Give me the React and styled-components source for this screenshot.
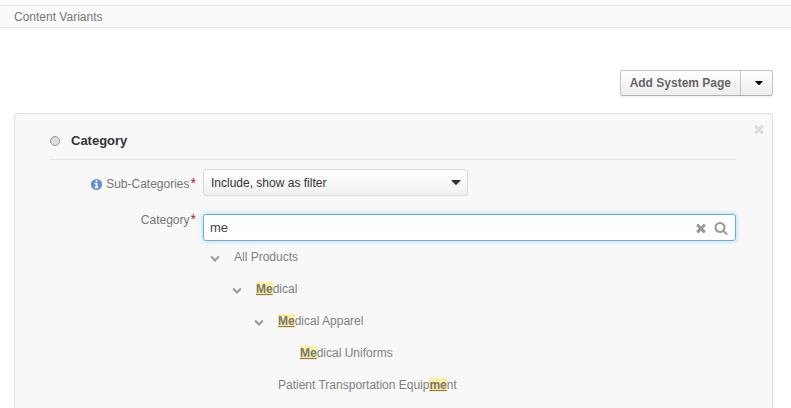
import React, { useState } from "react";
import styled, { createGlobalStyle } from "styled-components";

const GlobalStyle = createGlobalStyle`
  *, *::before, *::after { box-sizing: border-box; }
  body {
    margin: 0;
    background: #fff;
    color: #777;
    font: 12px/16px "Liberation Sans", Arial, sans-serif;
  }
  button, input, select { font: inherit; }
`;

const Page = styled.div`
  display: flex;
  flex-direction: column;
  min-height: 100vh;
  padding-top: 5px;
`;

const TitleBar = styled.header`
  padding: 3px 14px 2px;
  border: solid #e4e4e4;
  border-width: 1px 0;
  background: #fafafa;
  line-height: 16px;
`;

const Main = styled.main`
  display: flex;
  flex: 1;
  flex-direction: column;
  gap: 17px;
  padding: 42px 18px 0 14px;
`;

const SplitButton = styled.div`
  display: flex;
  align-self: flex-end;
  height: 26px;
  border: 1px solid #c4c4c4;
  border-bottom-color: #b0b0b0;
  border-radius: 3px;
  background: linear-gradient(#fff, #ededed);
  box-shadow: 0 1px 2px rgba(0, 0, 0, 0.08);
`;

const ActionButton = styled.button`
  padding: 0 9px;
  border: 0;
  background: none;
  color: #666;
  font-weight: bold;
`;

const MenuButton = styled.button`
  display: flex;
  align-items: center;
  justify-content: center;
  width: 32px;
  padding: 0 0 0 4px;
  border: 0;
  border-left: 1px solid #c4c4c4;
  background: none;
  color: #000;
`;

const Panel = styled.section`
  display: flex;
  flex: 1;
  align-items: flex-start;
  padding: 8px 6px 0 35px;
  border: 1px solid #e2e2e2;
  border-bottom: 0;
  border-radius: 4px 4px 0 0;
  background: #f8f8f8;
`;

const PanelBody = styled.div`
  flex: 1;
  min-width: 0;
`;

const IconButton = styled.button`
  display: flex;
  padding: 0;
  border: 0;
  background: none;
  color: ${(p) => p.$color || "#999"};
`;

const CloseSlot = styled.div`
  display: flex;
  justify-content: flex-end;
  width: 30px;
`;

const Heading = styled.label`
  display: flex;
  align-items: center;
  gap: 11px;
  height: 38px;
  margin-bottom: 9px;
  border-bottom: 1px solid #e4e4e4;
  color: #333;
  font-size: 13px;
  font-weight: bold;
`;

const Radio = styled.input`
  appearance: none;
  width: 10px;
  height: 10px;
  margin: 0;
  border: 1px solid #999;
  border-radius: 50%;
  background: #ddd;
`;

const FormRow = styled.div`
  display: grid;
  grid-template-columns: 146px minmax(0, 1fr);
  gap: 7px;
  margin-bottom: ${(p) => p.$space || 0}px;
`;

const Label = styled.label`
  display: flex;
  align-items: center;
  align-self: start;
  justify-content: flex-end;
  height: ${(p) => p.$height}px;
`;

const InfoSlot = styled.span`
  display: flex;
  margin-right: 3px;
  color: #668dd1;
`;

const Required = styled.span`
  padding-left: 1px;
  padding-bottom: 2px;
  color: #b3123b;
  font-size: 14px;
`;

const SelectWrap = styled.div`
  display: grid;
  grid-template: 27px / 1fr;
  align-items: center;
  width: 265px;
  color: #333;

  > * { grid-area: 1 / 1; }
  > svg { justify-self: end; margin-right: 7px; pointer-events: none; }
`;

const Select = styled.select`
  appearance: none;
  width: 100%;
  height: 27px;
  padding: 0 24px 0 7px;
  border: 1px solid #d9d9d9;
  border-radius: 3px;
  background: linear-gradient(#fff, #f1f1f1);
  color: #333;
`;

const SearchBox = styled.div`
  display: flex;
  align-items: center;
  gap: 6px;
  height: 27px;
  padding: 0 7px 0 6px;
  border: 1px solid #62aeeb;
  border-radius: 3px;
  background: #fff;
  box-shadow: 0 0 5px rgba(98, 174, 235, 0.5);
`;

const SearchInput = styled.input`
  flex: 1;
  min-width: 0;
  height: 24px;
  padding: 0;
  border: 0;
  outline: 0;
  background: none;
  color: #444;
  font-size: 13px;
`;

const Tree = styled.ul`
  margin: 0;
  padding: 0 0 0 ${(p) => (p.$nested ? 22 : 7)}px;
  list-style: none;
`;

const TreeRow = styled.div`
  display: flex;
  align-items: center;
  gap: 14px;
  height: 32px;
  color: #808080;
`;

const ToggleSlot = styled.div`
  display: flex;
  width: 10px;
  padding-top: 2px;
`;

const Match = styled.mark`
  background: #ffeea0;
  color: #777;
  font-weight: bold;
  text-decoration: underline;
`;

const ICONS = {
  times:
    "M1490 1322q0 40-28 68l-136 136q-28 28-68 28t-68-28l-294-294-294 294q-28 28-68 28t-68-28l-136-136q-28-28-28-68t28-68l294-294-294-294q-28-28-28-68t28-68l136-136q28-28 68-28t68 28l294 294 294-294q28-28 68-28t68 28l136 136q28 28 28 68t-28 68l-294 294 294 294q28 28 28 68z",
  search:
    "M1216 832q0-185-131.5-316.5t-316.5-131.5-316.5 131.5-131.5 316.5 131.5 316.5 316.5 131.5 316.5-131.5 131.5-316.5zm512 832q0 52-38 90t-90 38q-54 0-90-38l-343-342q-179 124-399 124-143 0-273.5-55.5t-225-150-150-225-55.5-273.5 55.5-273.5 150-225 225-150 273.5-55.5 273.5 55.5 225 150 150 225 55.5 273.5q0 220-124 399l343 343q37 37 37 90z",
  chevron:
    "M1683 808l-742 741q-19 19-45 19t-45-19l-742-741q-19-19-19-45.5t19-45.5l166-165q19-19 45-19t45 19l531 531 531-531q19-19 45-19t45 19l166 165q19 19 19 45.5t-19 45.5z",
  info:
    "M896 128a768 768 0 1 0 0 1536a768 768 0 1 0 0-1536zM1152 1376v-160q0-14-9-23t-23-9h-96v-512q0-14-9-23t-23-9h-320q-14 0-23 9t-9 23v160q0 14 9 23t23 9h96v320h-96q-14 0-23 9t-9 23v160q0 14 9 23t23 9h448q14 0 23-9t9-23zM1024 480v-160q0-14-9-23t-23-9h-192q-14 0-23 9t-9 23v160q0 14 9 23t23 9h192q14 0 23-9t9-23z",
};

function Icon({ name, size }) {
  return (
    <svg width={size} height={size} viewBox="0 0 1792 1792" fill="currentColor" aria-hidden="true">
      <path d={ICONS[name]} fillRule="evenodd" />
    </svg>
  );
}

function Caret({ width = 10, height = 5 }) {
  return (
    <svg width={width} height={height} viewBox="0 0 10 5" fill="currentColor" aria-hidden="true">
      <path d="M1 0h8q1 0 .4.8L5.8 4.6Q5 5.2 4.2 4.6L.6.8Q0 0 1 0z" />
    </svg>
  );
}

const categories = [
  {
    name: "All Products",
    children: [
      {
        name: "Medical",
        children: [
          { name: "Medical Apparel", children: [{ name: "Medical Uniforms" }] },
          { name: "Patient Transportation Equipment" },
        ],
      },
    ],
  },
];

function Highlighted({ text, query }) {
  const at = query ? text.toLowerCase().indexOf(query.toLowerCase()) : -1;
  if (at < 0) return <span>{text}</span>;
  const end = at + query.length;
  return (
    <span>
      {text.slice(0, at)}
      <Match>{text.slice(at, end)}</Match>
      {text.slice(end)}
    </span>
  );
}

function TreeItem({ item, query }) {
  const [open, setOpen] = useState(true);
  return (
    <li>
      <TreeRow>
        <ToggleSlot>
          {item.children && (
            <IconButton
              type="button"
              aria-label={`Toggle ${item.name}`}
              aria-expanded={open}
              onClick={() => setOpen(!open)}
            >
              <Icon name="chevron" size={10} />
            </IconButton>
          )}
        </ToggleSlot>
        <Highlighted text={item.name} query={query} />
      </TreeRow>
      {open && item.children && <TreeList items={item.children} query={query} nested />}
    </li>
  );
}

function TreeList({ items, query, nested }) {
  return (
    <Tree $nested={nested}>
      {items.map((item) => (
        <TreeItem key={item.name} item={item} query={query} />
      ))}
    </Tree>
  );
}

export default function App() {
  const [query, setQuery] = useState("me");
  return (
    <>
      <GlobalStyle />
      <Page>
        <TitleBar>Content Variants</TitleBar>
        <Main>
          <SplitButton>
            <ActionButton type="button">Add System Page</ActionButton>
            <MenuButton type="button" aria-label="More page types">
              <Caret width={8} height={4} />
            </MenuButton>
          </SplitButton>
          <Panel>
            <PanelBody>
              <Heading>
                <Radio type="radio" name="variant" />
                Category
              </Heading>
              <FormRow $space={15}>
                <Label htmlFor="sub-categories" $height={30}>
                  <InfoSlot>
                    <Icon name="info" size={13} />
                  </InfoSlot>
                  Sub-Categories<Required>*</Required>
                </Label>
                <SelectWrap>
                  <Select id="sub-categories" defaultValue="filter">
                    <option value="filter">Include, show as filter</option>
                  </Select>
                  <Caret />
                </SelectWrap>
              </FormRow>
              <FormRow>
                <Label htmlFor="category" $height={12}>
                  Category<Required>*</Required>
                </Label>
                <div>
                  <SearchBox>
                    <SearchInput
                      id="category"
                      type="text"
                      value={query}
                      onChange={(e) => setQuery(e.target.value)}
                    />
                    <IconButton type="button" aria-label="Clear" onClick={() => setQuery("")}>
                      <Icon name="times" size={14} />
                    </IconButton>
                    <IconButton type="button" aria-label="Search">
                      <Icon name="search" size={14} />
                    </IconButton>
                  </SearchBox>
                  <TreeList items={categories} query={query} />
                </div>
              </FormRow>
            </PanelBody>
            <CloseSlot>
              <IconButton type="button" aria-label="Remove" $color="#ddd">
                <Icon name="times" size={14} />
              </IconButton>
            </CloseSlot>
          </Panel>
        </Main>
      </Page>
    </>
  );
}
